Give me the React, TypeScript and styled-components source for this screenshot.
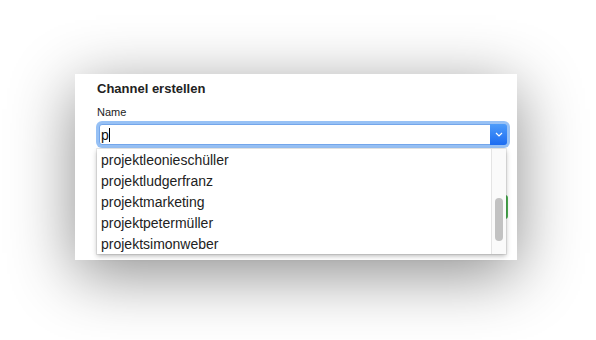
import React from "react";
import styled, { createGlobalStyle } from "styled-components";

const GlobalStyle = createGlobalStyle`
  html, body { margin: 0; padding: 0; background: #ffffff; }
  body { font-family: "Liberation Sans", Arial, Helvetica, sans-serif; }
  * { box-sizing: border-box; }
`;

const Stage = styled.div`
  width: 596px;
  height: 340px;
  padding: 74px 0 0 75px;
  overflow: hidden;
`;

const Card = styled.div`
  position: relative;
  width: 442px;
  height: 186px;
  background: #ffffff;
  padding: 7px 10px 0 22px;
  box-shadow: 0 14px 60px rgba(0, 0, 0, 0.45);
`;

const Title = styled.div`
  font-size: 13px;
  line-height: 16px;
  font-weight: 700;
  color: #222;
`;

const Label = styled.div`
  margin-top: 8px;
  font-size: 11px;
  line-height: 14px;
  color: #222;
`;

const Field = styled.div`
  margin: 5px 0 0 2px;
  width: 408px;
  height: 21px;
  display: flex;
  align-items: stretch;
  border: 1px solid #74a6ea;
  border-radius: 3px;
  background: #fff;
  box-shadow: 0 0 0 3px #97c1f5;
`;

const FieldText = styled.div`
  flex: 1;
  display: flex;
  align-items: center;
  padding-left: 1px;
  font-size: 14px;
  color: #111;
`;

const Caret = styled.span`
  display: inline-block;
  width: 1px;
  height: 14px;
  background: #000;
`;

const DropButton = styled.div`
  width: 17px;
  margin: -1px -1px -1px 0;
  border-radius: 0 3px 3px 0;
  background: linear-gradient(#4d9cfa, #1d6cf1);
  display: flex;
  align-items: center;
  justify-content: center;
`;

const Footer = styled.div`
  margin-top: 50px;
  width: 411px;
  display: flex;
  justify-content: flex-end;
`;

const GreenButton = styled.div`
  width: 70px;
  height: 24px;
  border-radius: 3px;
  background: #4cb152;
`;

const List = styled.div`
  position: absolute;
  left: 22px;
  top: 75px;
  width: 409px;
  height: 105px;
  background: #fff;
  overflow: hidden;
  box-shadow: 0 2px 5px rgba(0, 0, 0, 0.28), 0 0 0 1px rgba(0, 0, 0, 0.07);
`;

const Item = styled.div`
  height: 21px;
  padding: 2px 0 0 4px;
  line-height: 19px;
  font-size: 14px;
  color: #222;
  white-space: nowrap;
`;

const Track = styled.div`
  position: absolute;
  top: 0;
  right: 0;
  bottom: 0;
  width: 15px;
  background: #fafafa;
  border-left: 1px solid #e4e4e4;
`;

const Thumb = styled.div`
  position: absolute;
  left: 3px;
  top: 49px;
  width: 8px;
  height: 43px;
  border-radius: 4px;
  background: #c2c2c2;
`;

const items = [
  "projektleonieschüller",
  "projektludgerfranz",
  "projektmarketing",
  "projektpetermüller",
  "projektsimonweber",
];

export default function App() {
  return (
    <>
      <GlobalStyle />
      <Stage>
        <Card>
          <Title>Channel erstellen</Title>
          <Label>Name</Label>
          <Field>
            <FieldText>
              p<Caret />
            </FieldText>
            <DropButton>
              <svg width="8" height="5" viewBox="0 0 8 5">
                <path d="M1 1 L4 4 L7 1" fill="none" stroke="#fff" strokeWidth="1.2" />
              </svg>
            </DropButton>
          </Field>
          <Footer>
            <GreenButton />
          </Footer>
          <List>
            {items.map((t) => (
              <Item key={t}>{t}</Item>
            ))}
            <Track>
              <Thumb />
            </Track>
          </List>
        </Card>
      </Stage>
    </>
  );
}
